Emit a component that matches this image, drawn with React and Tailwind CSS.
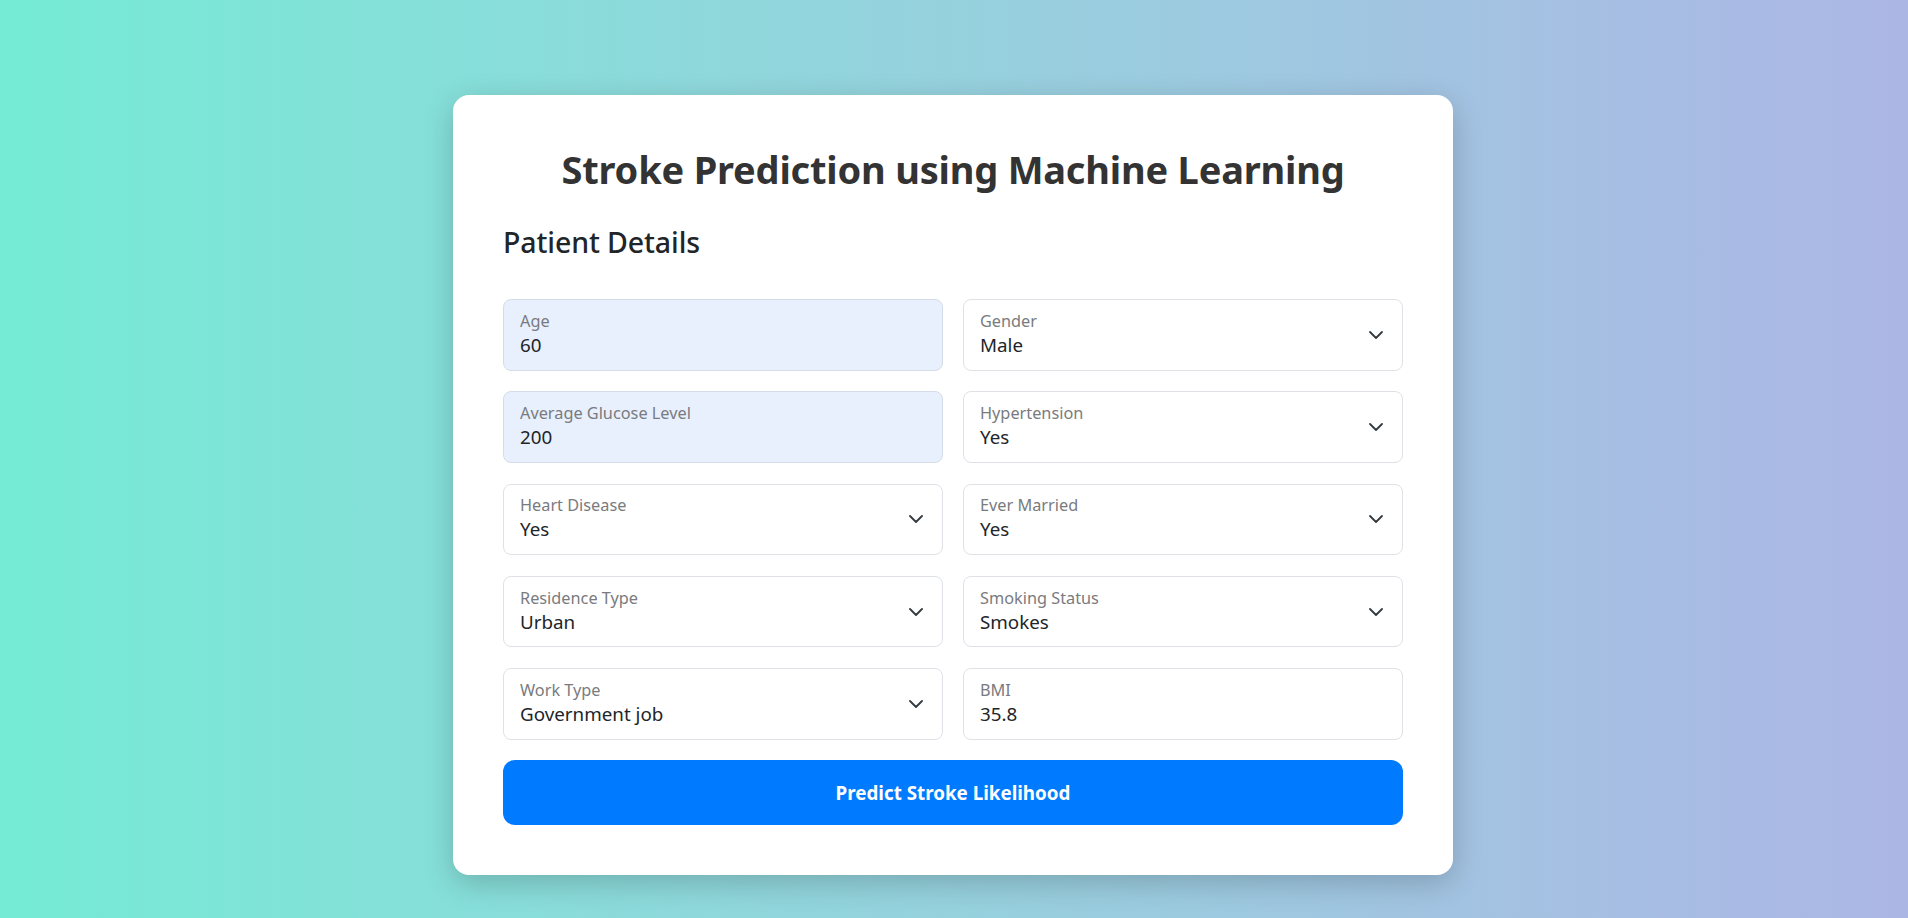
const fields = [
  { label: "Age", value: "60", autofill: true },
  { label: "Gender", value: "Male", select: true },
  { label: "Average Glucose Level", value: "200", autofill: true },
  { label: "Hypertension", value: "Yes", select: true },
  { label: "Heart Disease", value: "Yes", select: true },
  { label: "Ever Married", value: "Yes", select: true },
  { label: "Residence Type", value: "Urban", select: true },
  { label: "Smoking Status", value: "Smokes", select: true },
  { label: "Work Type", value: "Government job", select: true },
  { label: "BMI", value: "35.8" },
];

const Chevron = () => (
  <svg width="14" height="8" viewBox="0 0 14 8" fill="none" className="shrink-0">
    <path
      d="M1 1l6 6 6-6"
      stroke="#343a40"
      strokeWidth="1.8"
      strokeLinecap="round"
      strokeLinejoin="round"
    />
  </svg>
);

const Field = ({ label, value, select, autofill }) => (
  <div
    className={`h-[71.5px] rounded-[8px] border flex items-center justify-between pl-[16px] pr-[19px] ${
      autofill ? "bg-[#e8f0fe] border-[#d5dce8]" : "bg-white border-[#dee2e6]"
    }`}
  >
    <div className="flex flex-col pb-[2px]">
      <span className="text-[16.3px] leading-[20px] text-[#797b7e]">{label}</span>
      <span className="text-[18.8px] leading-[24px] mt-[2px] text-[#212529]">{value}</span>
    </div>
    {select && <Chevron />}
  </div>
);

export default function App() {
  return (
    <main className="min-h-screen bg-gradient-to-r from-[#74ebd5] to-[#acb6e5] pt-[95px] pb-[43px] pr-[2px] font-['Noto_Sans',sans-serif]">
      <div className="mx-auto w-[1000px] bg-white rounded-[16px] p-[50px] shadow-[0_8px_30px_rgba(0,0,0,0.2)]">
        <h1 className="text-center text-[38px] leading-[48px] tracking-[-0.2px] font-bold text-[#333333]">
          Stroke Prediction using Machine Learning
        </h1>
        <h4 className="mt-[31px] text-[28.5px] leading-[36px] tracking-[-0.1px] font-medium text-[#212529]">
          Patient Details
        </h4>
        <form className="mt-[39px] grid grid-cols-2 gap-x-[20px] gap-y-[20.8px]">
          {fields.map((f) => (
            <Field key={f.label} {...f} />
          ))}
          <button
            type="button"
            className="col-span-2 h-[65px] rounded-[12px] bg-[#007bff] text-white text-[18.8px] font-bold"
          >
            Predict Stroke Likelihood
          </button>
        </form>
      </div>
    </main>
  );
}
